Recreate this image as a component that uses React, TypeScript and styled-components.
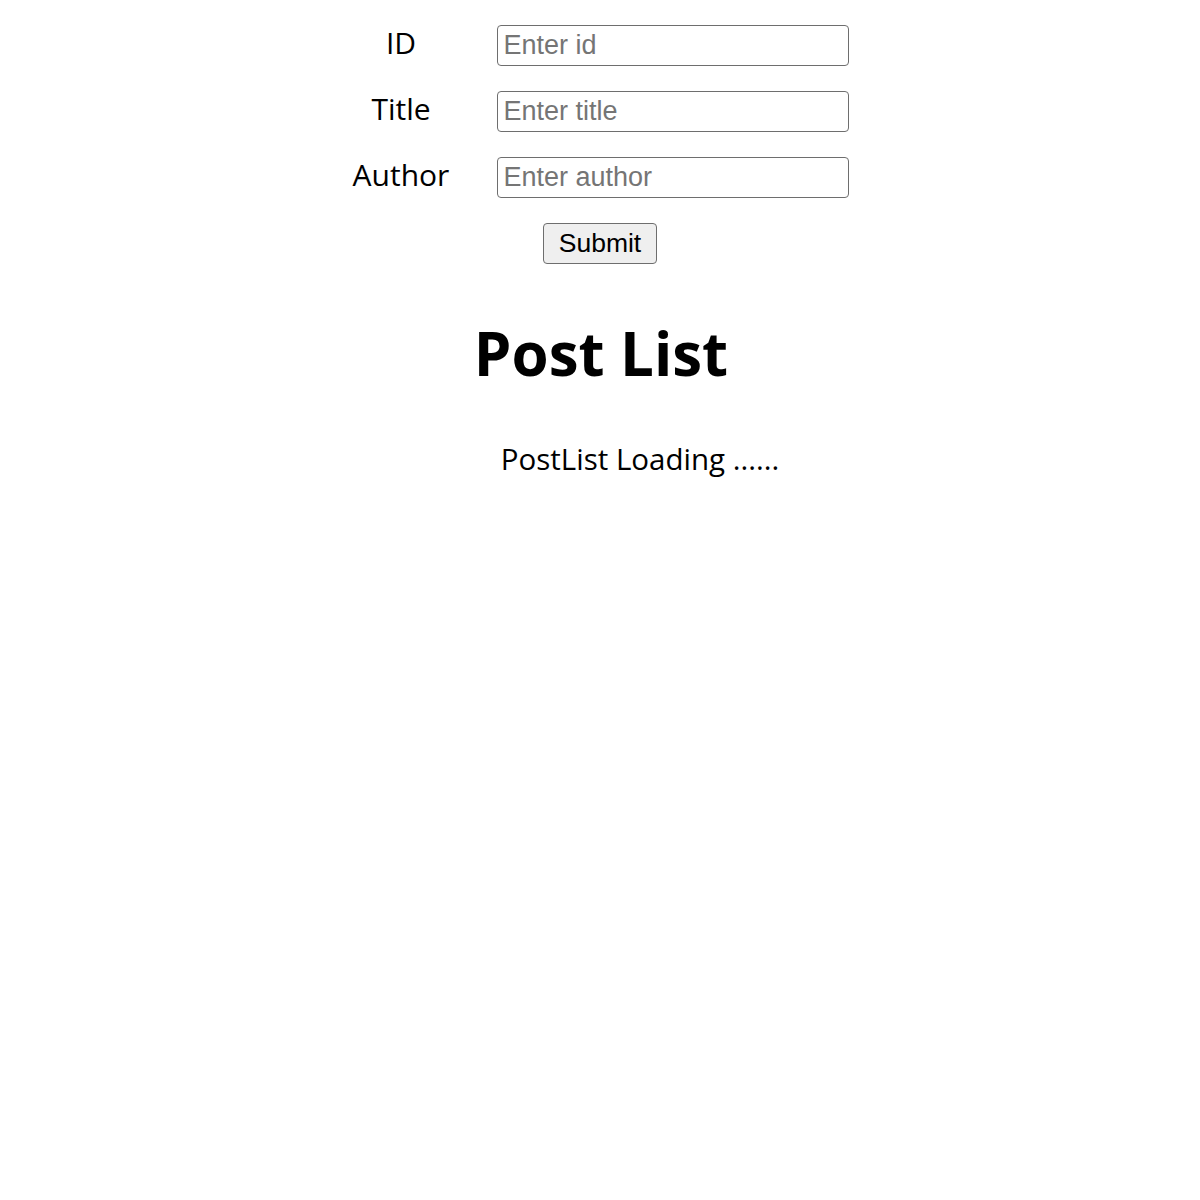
import React from "react";
import styled, { createGlobalStyle } from "styled-components";

const Global = createGlobalStyle`
  html, body { margin: 0; padding: 0; background: #fff; }
  body { font-family: "Open Sans", "Noto Sans", sans-serif; color: #000; }
`;

const Page = styled.div`
  display: flex;
  flex-direction: column;
  align-items: center;
  padding-top: 25px;
  padding-left: 2px;
`;

const Form = styled.form`
  display: grid;
  grid-template-columns: auto 352px;
  column-gap: 48px;
  row-gap: 25px;
  align-items: center;
`;

const Label = styled.label`
  font-family: "Open Sans", "Noto Sans", sans-serif;
  font-size: 30px;
  line-height: 41px;
  text-align: center;
  margin-top: -6px;
`;

const Input = styled.input`
  box-sizing: border-box;
  width: 352px;
  height: 41px;
  font-family: "Liberation Sans", Arial, sans-serif;
  font-size: 27px;
  padding: 0 5px;
  border: 1px solid #6e6e6e;
  border-radius: 4px;
  outline: none;
  &::placeholder { color: #757575; }
`;

const ButtonRow = styled.div`
  grid-column: 1 / -1;
  display: flex;
  justify-content: center;
  margin-left: -2px;
`;

const Button = styled.button`
  box-sizing: border-box;
  height: 41px;
  padding: 0 15px;
  font-family: "Liberation Sans", Arial, sans-serif;
  font-size: 26.5px;
  color: #000;
  background: #efefef;
  border: 1px solid #6e6e6e;
  border-radius: 4px;
`;

const Heading = styled.h1`
  margin: 49px 0 0;
  font-family: "Open Sans", "Noto Sans", sans-serif;
  font-size: 60px;
  font-weight: 700;
  line-height: 80px;
  text-align: center;
`;

const Loading = styled.p`
  align-self: stretch;
  margin: 46px 0 0;
  padding-left: 78px;
  font-family: "Open Sans", "Noto Sans", sans-serif;
  font-size: 29.5px;
  line-height: 40px;
  text-align: center;
`;

export default function App() {
  return (
    <>
      <Global />
      <Page>
        <Form onSubmit={(e) => e.preventDefault()}>
          <Label htmlFor="id">ID</Label>
          <Input id="id" placeholder="Enter id" />
          <Label htmlFor="title">Title</Label>
          <Input id="title" placeholder="Enter title" />
          <Label htmlFor="author">Author</Label>
          <Input id="author" placeholder="Enter author" />
          <ButtonRow>
            <Button type="submit">Submit</Button>
          </ButtonRow>
        </Form>
        <Heading>Post List</Heading>
        <Loading>PostList Loading ......</Loading>
      </Page>
    </>
  );
}
